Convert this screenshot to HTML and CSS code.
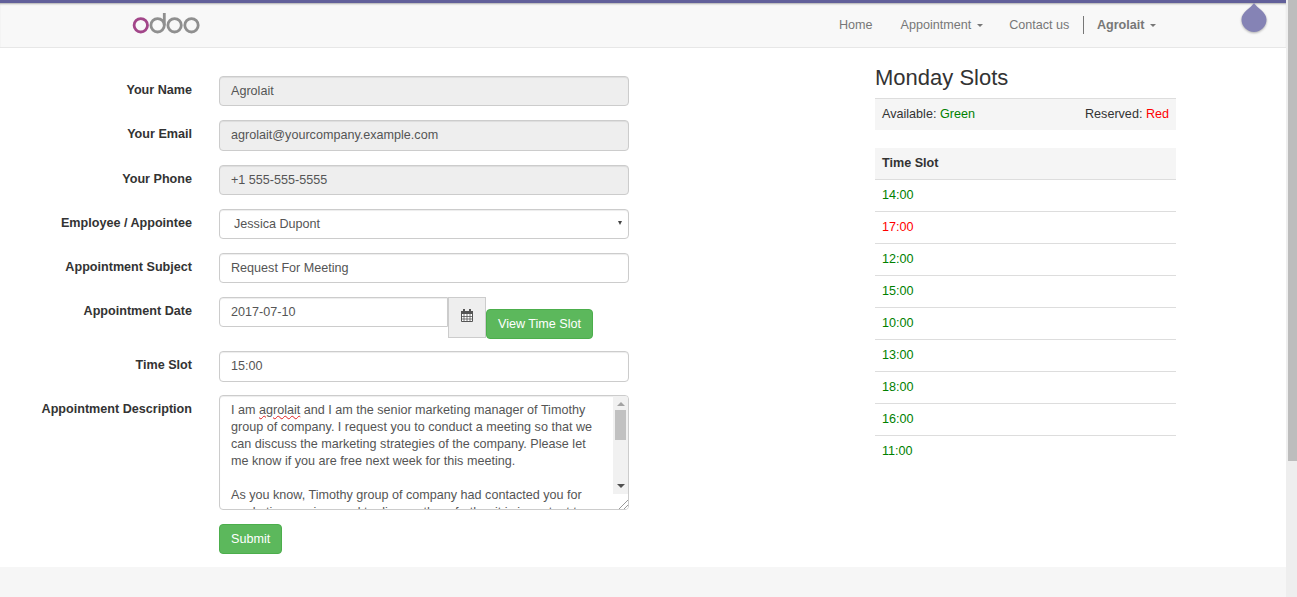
FILE: index.html
```html
<!DOCTYPE html>
<html lang="en">
<head>
    <meta charset="UTF-8" />
    <title>Appointment</title>
    <link rel="stylesheet" href="styles.css">
</head>
<body>
    <div class="page">
        <header class="navbar">
            <svg class="logo" viewBox="0 0 68 24" width="68" height="24">
                <circle cx="8.800" cy="12.300" r="6.700" fill="none" stroke="#a24689" stroke-width="2.800"/>
                <circle cx="25.600" cy="12.300" r="6.700" fill="none" stroke="#8f8f8f" stroke-width="2.800"/>
                <path d="M32.300 12.300V0" fill="none" stroke="#8f8f8f" stroke-width="2.800"/>
                <circle cx="42.600" cy="12.300" r="6.700" fill="none" stroke="#8f8f8f" stroke-width="2.800"/>
                <circle cx="59.500" cy="12.300" r="6.700" fill="none" stroke="#8f8f8f" stroke-width="2.800"/>
            </svg>
            <nav class="nav">
                <a class="nav-link nav-home">Home</a>
                <a class="nav-link nav-appointment">Appointment <span class="caret"></span></a>
                <a class="nav-link">Contact us</a>
                <a class="nav-link nav-user">Agrolait <span class="caret"></span></a>
            </nav>
            <svg class="drop" viewBox="0 0 28 34" width="28" height="34">
                <path d="M14 3C11 8 1.500 12 1.500 19.500a12.500 12.500 0 0 0 25 0C26.500 12 17 8 14 3z" fill="#8583b5"/>
            </svg>
        </header>

        <main class="content">
            <form class="form">
                <div class="row">
                    <label>Your Name</label>
                    <div class="control readonly">Agrolait</div>
                </div>
                <div class="row">
                    <label>Your Email</label>
                    <div class="control readonly">agrolait@yourcompany.example.com</div>
                </div>
                <div class="row">
                    <label>Your Phone</label>
                    <div class="control readonly">+1 555-555-5555</div>
                </div>
                <div class="row">
                    <label>Employee / Appointee</label>
                    <div class="control select">Jessica Dupont<span class="select-arrow"></span></div>
                </div>
                <div class="row">
                    <label>Appointment Subject</label>
                    <div class="control">Request For Meeting</div>
                </div>
                <div class="row row-date">
                    <label>Appointment Date</label>
                    <div class="date-group">
                        <div class="control date-input">2017-07-10</div>
                        <span class="addon">
                            <svg viewBox="0 0 12 13" width="12" height="13">
                                <path d="M.5 2.500h11v10H.5z" fill="#fff" stroke="#555"/>
                                <path d="M0 2h12v3H0z" fill="#555"/>
                                <path d="M3 0v3.500M9 0v3.500" stroke="#555" stroke-width="2"/>
                                <path d="M0 7.500h12M0 10h12M3 5v8M6 5v8M9 5v8" stroke="#555" stroke-width=".8"/>
                            </svg>
                        </span>
                        <button type="button" class="btn btn-slot">View Time Slot</button>
                    </div>
                </div>
                <div class="row row-time">
                    <label>Time Slot</label>
                    <div class="control">15:00</div>
                </div>
                <div class="row row-desc">
                    <label>Appointment Description</label>
                    <div class="control textarea">
                        <div class="textarea-text">
                            <p>I am <span class="misspelled">agrolait</span> and I am the senior marketing manager of Timothy group of company. I request you to conduct a meeting so that we can discuss the marketing strategies of the company. Please let me know if you are free next week for this meeting.</p>
                            <p>As you know, Timothy group of company had contacted you for marketing services and to discuss them further it is important to</p>
                        </div>
                        <div class="textarea-scroll">
                            <span class="arrow-up"></span>
                            <span class="textarea-thumb"></span>
                            <span class="arrow-down"></span>
                            <span class="resizer"></span>
                        </div>
                    </div>
                </div>
                <div class="row row-submit">
                    <button type="button" class="btn">Submit</button>
                </div>
            </form>

            <aside class="slots">
                <h2>Monday Slots</h2>
                <div class="legend">
                    <span>Available: <span class="green">Green</span></span>
                    <span>Reserved: <span class="red">Red</span></span>
                </div>
                <table>
                    <thead>
                        <tr><th>Time Slot</th></tr>
                    </thead>
                    <tbody>
                        <tr><td class="green">14:00</td></tr>
                        <tr><td class="red">17:00</td></tr>
                        <tr><td class="green">12:00</td></tr>
                        <tr><td class="green">15:00</td></tr>
                        <tr><td class="green">10:00</td></tr>
                        <tr><td class="green">13:00</td></tr>
                        <tr><td class="green">18:00</td></tr>
                        <tr><td class="green">16:00</td></tr>
                        <tr><td class="green">11:00</td></tr>
                    </tbody>
                </table>
            </aside>
        </main>

        <footer class="footer"></footer>
    </div>
    <div class="page-scroll"><div class="page-thumb"></div></div>
</body>
</html>
```

FILE: styles.css
```css
html, body {
    margin: 0;
    padding: 0;
    height: 597px;
    overflow: hidden;
}
body {
    display: flex;
    color: #333;
    font-family: 'Liberation Sans', Arial, sans-serif;
    font-size: 12.600px;
    line-height: 18px;
}
.page {
    width: 1286px;
    height: 597px;
    display: flex;
    flex-direction: column;
}
.page-scroll {
    width: 11px;
    height: 597px;
    background-color: #eeeeee;
}
.page-thumb {
    margin-left: 2px;
    height: 461px;
    background-color: #bdbdbd;
}

/* top bar */
.navbar {
    height: 44px;
    flex: none;
    display: flex;
    align-items: center;
    position: relative;
    background-color: #f8f8f8;
    border-top: 3px solid #62609a;
    border-bottom: 1px solid #e7e7e7;
    box-shadow: inset 0 2px 2px -1px rgba(0, 0, 0, 0.3);
}
.logo {
    margin-left: 132px;
}
.nav {
    display: flex;
    align-items: center;
    margin-left: auto;
    margin-right: 116.500px;
}
.nav-link {
    color: #777;
    padding: 0 13.500px;
    white-space: nowrap;
}
.nav-home {
    padding-right: 14.500px;
}
.nav-appointment {
    padding-right: 13px;
}
.nav-user {
    padding-left: 13px;
    font-weight: bold;
    border-left: 1px solid #777;
}
.caret {
    display: inline-block;
    margin-left: 2px;
    vertical-align: middle;
    border-top: 3px solid #777;
    border-left: 3px solid transparent;
    border-right: 3px solid transparent;
}
.drop {
    position: absolute;
    right: 18px;
    top: -3px;
    filter: drop-shadow(0 1px 1px rgba(0, 0, 0, 0.3));
}

/* form */
.content {
    flex: 1;
    min-height: 0;
    display: flex;
    background-color: #fff;
}
.form {
    width: 629px;
    padding-top: 28.200px;
    flex: none;
}
.row {
    display: flex;
    margin-bottom: 13.910px;
}
.row label {
    width: 192px;
    margin-right: 27px;
    padding-top: 5px;
    flex: none;
    box-sizing: border-box;
    text-align: right;
    font-weight: bold;
    color: #333;
}
.row-date {
    height: 40.290px;
}
.row-time {
    margin-bottom: 13.500px;
}
.row-desc {
    margin-bottom: 14px;
}
.row-submit {
    padding-left: 219px;
    margin-bottom: 0;
}
.control {
    flex: 1;
    height: 30.290px;
    box-sizing: border-box;
    padding: 5px 11px;
    color: #555;
    background-color: #fff;
    border: 1px solid #ccc;
    border-radius: 4px;
    box-shadow: inset 0 1px 1px rgba(0, 0, 0, 0.075);
    white-space: nowrap;
}
.readonly {
    background-color: #eee;
}
.select {
    position: relative;
    padding-left: 14px;
}
.select-arrow {
    position: absolute;
    right: 6px;
    top: 11px;
    border-top: 4px solid #444;
    border-left: 2.500px solid transparent;
    border-right: 2.500px solid transparent;
}
.date-group {
    display: flex;
    align-items: flex-start;
    flex: 1;
}
.date-input {
    flex: none;
    width: 229px;
    border-radius: 4px 0 0 4px;
}
.addon {
    width: 38px;
    height: 41px;
    flex: none;
    box-sizing: border-box;
    display: flex;
    justify-content: center;
    padding-top: 11px;
    background-color: #eee;
    border: 1px solid #ccc;
}
.btn {
    height: 30px;
    padding: 0 11px;
    color: #fff;
    font: inherit;
    background-color: #5cb85c;
    border: 1px solid #4cae4c;
    border-radius: 4px;
}
.btn-slot {
    margin-top: 11.700px;
}
.textarea {
    position: relative;
    height: 114.700px;
    padding: 6px 0 0 11px;
    overflow: hidden;
    white-space: normal;
}
.textarea-text {
    width: 367px;
    line-height: 17px;
}
.textarea-text p {
    margin: 0 0 17px;
}
.misspelled {
    text-decoration: underline wavy #e02020 1px;
    text-underline-offset: 1px;
}
.textarea-scroll {
    position: absolute;
    top: 0;
    right: 0;
    bottom: 0;
    width: 15px;
    background-color: #f1f1f1;
}
.textarea-thumb {
    position: absolute;
    top: 14px;
    left: 2px;
    width: 11px;
    height: 30px;
    background-color: #c1c1c1;
}
.arrow-up, .arrow-down {
    position: absolute;
    left: 3.500px;
    border-left: 4px solid transparent;
    border-right: 4px solid transparent;
}
.arrow-up {
    top: 6px;
    border-bottom: 4px solid #a3a3a3;
}
.arrow-down {
    bottom: 21px;
    border-top: 4px solid #505050;
}
.resizer {
    position: absolute;
    right: 0;
    bottom: 0;
    width: 15px;
    height: 15px;
    background-color: #fff;
    background-image: linear-gradient(135deg, transparent 68%, #999 68%, #999 72%, transparent 72%, transparent 84%, #999 84%, #999 88%, transparent 88%);
}

/* right column */
.slots {
    width: 301px;
    margin-left: 246px;
    flex: none;
}
.slots h2 {
    margin: 17px 0 7px;
    font-size: 22px;
    font-weight: 500;
    line-height: 26px;
    color: #333;
}
.legend {
    display: flex;
    justify-content: space-between;
    height: 32px;
    padding: 6px 7px 0;
    box-sizing: border-box;
    background-color: #f5f5f5;
    border-top: 1px solid #ddd;
}
.green {
    color: green;
}
.red {
    color: red;
}
table {
    width: 100%;
    margin-top: 18px;
    border-spacing: 0;
}
th {
    height: 32px;
    padding: 0 7px 2px;
    box-sizing: border-box;
    text-align: left;
    background-color: #f5f5f5;
    border-bottom: 1px solid #ddd;
}
td {
    height: 32px;
    padding: 0 7px 2px;
    box-sizing: border-box;
    border-bottom: 1px solid #ddd;
}
tbody tr:last-child td {
    border-bottom: none;
}

.footer {
    height: 30px;
    flex: none;
    background-color: #f6f6f6;
}
```
